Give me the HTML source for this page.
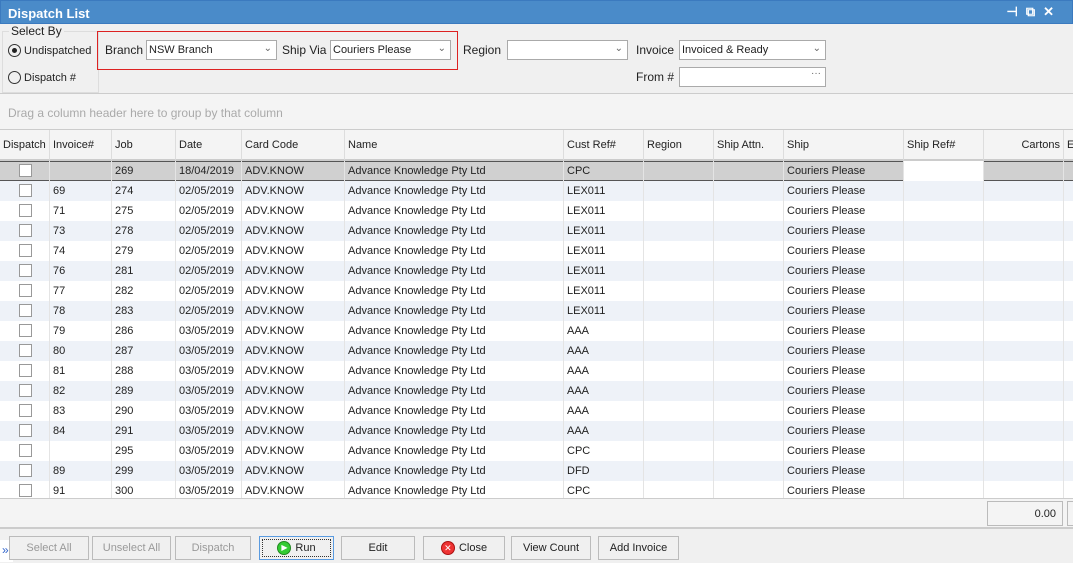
<!DOCTYPE html>
<html><head><meta charset="utf-8"><style>
*{box-sizing:border-box;margin:0;padding:0}
body{width:1073px;height:563px;overflow:hidden;background:#f0f0f0;font-family:"Liberation Sans",sans-serif;font-size:11px;color:#222;position:relative}
.a{position:absolute;white-space:nowrap}
.title{left:0;top:0;width:1073px;height:24px;background:#4a8bc9;color:#fff;font-weight:bold;font-size:13px;padding:5px 7px;border:1px solid #3b7abf}
.combo{position:absolute;height:20px;background:#fff;border:1px solid #aaa;padding:3px 2px;font-size:11px}
.combo .v{position:absolute;right:4px;top:2px;color:#666;font-size:10px}
.grid{left:0;top:129px;width:1073px;height:370px;background:#fff;border-top:1px solid #ccc;overflow:hidden}
.hr{position:absolute;top:0;height:31px;border-right:1px solid #ddd;border-bottom:2px solid #ccc;background:#f4f4f4;padding:9px 3px}
.row{position:absolute;left:0;width:1073px;height:20px}
.c{position:absolute;top:0;height:20px;border-right:1px solid #e4e4e4;padding:4px 3px;overflow:hidden}
.cb{position:absolute;left:19px;top:3px;width:13px;height:13px;border:1px solid #999;background:#fff}
.btn{position:absolute;top:536px;height:24px;border:1px solid #bbb;background:#f0f0f0;display:flex;align-items:center;justify-content:center;gap:4px;font-size:11px}
.dis{color:#999}
.ic{display:inline-block;width:14px;height:14px;border-radius:50%;color:#fff;font-size:8px;line-height:12px;text-align:center}
</style></head><body>
<div class="a title">Dispatch List<span style="position:absolute;right:10px;top:3px;font-size:13px;letter-spacing:8px">⊣⧉✕</span></div>
<div class="a" style="left:2px;top:31px;width:97px;height:62px;border:1px solid #ddd"></div>
<div class="a" style="left:9px;top:24px;background:#f0f0f0;padding:0 2px;font-size:12px">Select By</div>
<div class="a" style="left:8px;top:44px;font-size:11px"><span style="display:inline-block;width:13px;height:13px;border:1px solid #333;border-radius:50%;vertical-align:-3px;position:relative"><span style="position:absolute;left:3px;top:3px;width:5px;height:5px;border-radius:50%;background:#222"></span></span> Undispatched</div>
<div class="a" style="left:8px;top:71px;font-size:11px"><span style="display:inline-block;width:13px;height:13px;border:1px solid #333;border-radius:50%;vertical-align:-3px"></span> Dispatch #</div>
<div class="a" style="left:97px;top:31px;width:361px;height:39px;border:1px solid #d22"></div>
<div class="a" style="left:105px;top:43px;font-size:12px">Branch</div>
<div class="combo" style="left:146px;top:40px;width:131px">NSW Branch<span class="v">⌄</span></div>
<div class="a" style="left:282px;top:43px;font-size:12px">Ship Via</div>
<div class="combo" style="left:330px;top:40px;width:121px">Couriers Please<span class="v">⌄</span></div>
<div class="a" style="left:463px;top:43px;font-size:12px">Region</div>
<div class="combo" style="left:507px;top:40px;width:121px"><span class="v">⌄</span></div>
<div class="a" style="left:636px;top:43px;font-size:12px">Invoice</div>
<div class="combo" style="left:679px;top:40px;width:147px">Invoiced &amp; Ready<span class="v">⌄</span></div>
<div class="a" style="left:636px;top:70px;font-size:12px">From #</div>
<div class="combo" style="left:679px;top:67px;width:147px"><span class="v" style="top:0">···</span></div>
<div class="a" style="left:0;top:93px;width:1073px;height:36px;background:#f4f4f4;border-top:1px solid #ccc"></div>
<div class="a" style="left:8px;top:106px;color:#aaa;font-size:12px">Drag a column header here to group by that column</div>
<div class="a grid" id="g"></div>
<div class="a" style="left:0;top:498px;width:1073px;height:31px;background:#f4f4f4;border-top:1px solid #ccc;border-bottom:2px solid #ccc"></div>
<div class="a" style="left:987px;top:501px;width:76px;height:25px;border:1px solid #bbb;text-align:right;padding:6px 6px;font-size:11px;color:#222">0.00</div>
<div class="a" style="left:1067px;top:501px;width:10px;height:25px;border:1px solid #bbb"></div>
<div class="a" style="left:0;top:540px;width:13px;height:22px;background:#fff;color:#36c;font-size:12px;padding:3px 2px">»</div>
<div class="btn dis" style="left:9px;width:80px">Select All</div>
<div class="btn dis" style="left:92px;width:79px">Unselect All</div>
<div class="btn dis" style="left:175px;width:76px">Dispatch</div>
<div class="btn" style="left:259px;width:75px;border:1px solid #5a9be0;outline:1px dotted #333;outline-offset:-4px"><span class="ic" style="background:#3c3;border:1px solid #282">▶</span>Run</div>
<div class="btn" style="left:341px;width:74px">Edit</div>
<div class="btn" style="left:423px;width:82px"><span class="ic" style="background:#e33;border:1px solid #a11;font-size:9px">✕</span>Close</div>
<div class="btn" style="left:511px;width:80px">View Count</div>
<div class="btn" style="left:598px;width:81px">Add Invoice</div>
<script>
var cols=[[0,50,'Dispatch'],[50,62,'Invoice#'],[112,64,'Job'],[176,66,'Date'],[242,103,'Card Code'],[345,219,'Name'],[564,80,'Cust Ref#'],[644,70,'Region'],[714,70,'Ship Attn.'],[784,120,'Ship'],[904,80,'Ship Ref#'],[984,80,'Cartons'],[1064,20,'E']];
var d=[['','269','18/04/2019','CPC'],['69','274','02/05/2019','LEX011'],['71','275','02/05/2019','LEX011'],['73','278','02/05/2019','LEX011'],['74','279','02/05/2019','LEX011'],['76','281','02/05/2019','LEX011'],['77','282','02/05/2019','LEX011'],['78','283','02/05/2019','LEX011'],['79','286','03/05/2019','AAA'],['80','287','03/05/2019','AAA'],['81','288','03/05/2019','AAA'],['82','289','03/05/2019','AAA'],['83','290','03/05/2019','AAA'],['84','291','03/05/2019','AAA'],['','295','03/05/2019','CPC'],['89','299','03/05/2019','DFD'],['91','300','03/05/2019','CPC']];
var h='';cols.forEach(function(c,i){h+='<div class="hr" style="left:'+c[0]+'px;width:'+c[1]+'px;'+(i==11?'text-align:right':'')+'">'+c[2]+'</div>'});
d.forEach(function(r,i){var bg=i==0?'#d0d0d0':(i%2?'#eef2f8':'#fff');var vals=['',r[0],r[1],r[2],'ADV.KNOW','Advance Knowledge Pty Ltd',r[3],'','','Couriers Please','','',''];
h+='<div class="row" style="top:'+(31+i*20)+'px;background:'+bg+(i==0?';border-top:1px solid #555;border-bottom:1px solid #555':'')+'">';
cols.forEach(function(c,j){var st='left:'+c[0]+'px;width:'+c[1]+'px;';if(i==0){st+='top:-1px;';if(j==10)st+='background:#fff;';}h+='<div class="c" style="'+st+'">'+(j==0?'<div class="cb"></div>':vals[j])+'</div>'});h+='</div>'});
document.getElementById('g').innerHTML=h;
</script>
</body></html>
